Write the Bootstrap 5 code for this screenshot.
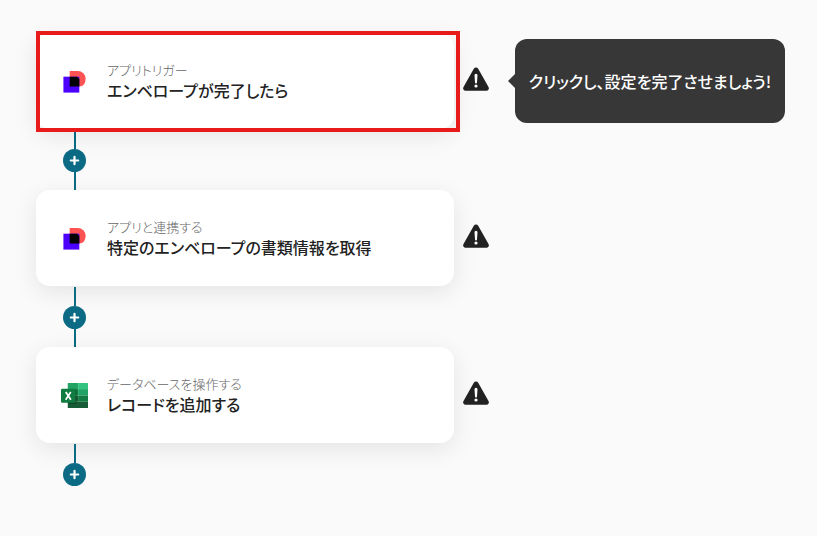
<!DOCTYPE html>
<html lang="ja">
<head>
<meta charset="utf-8">
<meta name="viewport" content="width=device-width, initial-scale=1">
<title>フロー設定</title>
<link href="https://cdn.jsdelivr.net/npm/bootstrap@5.3.0/dist/css/bootstrap.min.css" rel="stylesheet">
<style>
body, button { font-family: "Noto Sans CJK JP", "Noto Sans", sans-serif; font-feature-settings: "palt"; }
body { background: #fafafa; color: #222; }
.flow { padding: 33px 32px 32px 36px; }
.step-card { flex: 0 1 418px; min-width: 0; min-height: 96px; padding: 16px 25px; gap: 19px; background: #fff; color: #222; border: 0; border-radius: 14px; box-shadow: 0 6px 24px rgba(0,0,0,.09); }
.step-card svg { flex: none; }
.step-kind { font-size: 13px; line-height: 18px; font-weight: 300; color: #666; }
.step-title { font-size: 16px; line-height: 22px; font-weight: 500; }
.highlight::after { content: ""; position: absolute; inset: -2px -6px -3px 0; border: 4px solid #e81a1a; pointer-events: none; }
.warn { margin-left: 9px; padding: 0 0 4px; line-height: 0; }
.link-line { width: 77px; padding-top: 1px; }
.stem { width: 2px; background: #0b6a84; }
.stem-up { height: 19px; }
.stem-down { height: 18px; }
.add { width: 23px; height: 23px; background: #0b6a84; line-height: 0; }
.hint { flex: 0 1 270px; margin-left: 26px; min-height: 84px; padding: 4px 12px; border-radius: 12px; background: #373737; color: #fff; font-size: 16px; line-height: 24px; font-weight: 500; }
.hint::before { content: ""; position: absolute; right: 100%; top: 50%; transform: translateY(-50%); border: 7px solid transparent; border-left: 0; border-right-color: #373737; }
</style>
<script src="https://cdn.jsdelivr.net/npm/bootstrap@5.3.0/dist/js/bootstrap.bundle.min.js"></script>
</head>
<body>
<svg class="d-none" aria-hidden="true">
  <symbol id="i-warn" viewBox="0 0 26 24"><path d="M10.8 1.7a2.5 2.5 0 0 1 4.4 0l10.3 18.2a2.5 2.5 0 0 1-2.2 3.8H2.7a2.5 2.5 0 0 1-2.2-3.8z" fill="#222"/><path d="M11.5 8.2a1.5 1.5 0 0 1 3 0l-.5 7.3a1 1 0 0 1-2 0z" fill="#fff"/><circle cx="13" cy="19" r="1.6" fill="#fff"/></symbol>
  <symbol id="i-sign" viewBox="0 0 28 28"><path d="M9 3h8.500a8 8 0 0 1 8 8c0 5.500-2.500 8.200-6.500 8.200H9z" fill="#ff5252"/><path d="M2.500 9h16.500v16.500H2.500z" fill="#4c00ff"/><path d="M9 9h7.500l2.500 2.500v7.700H9z" fill="#000"/></symbol>
  <symbol id="i-plus" viewBox="0 0 23 23"><path d="M11.500 7.800v7.400M7.800 11.500h7.400" stroke="#fff" stroke-width="2.200" stroke-linecap="round"/></symbol>
</svg>
<main class="flow">
  <div class="d-flex align-items-center">
    <button type="button" class="step-card highlight position-relative d-flex align-items-center text-start">
      <svg width="27" height="27" aria-hidden="true"><use href="#i-sign"/></svg>
      <span><span class="step-kind d-block">アプリトリガー</span><span class="step-title d-block">エンベロープが完了したら</span></span>
    </button>
    <button type="button" class="warn btn border-0" aria-label="設定が未完了です"><svg width="26" height="24"><use href="#i-warn"/></svg></button>
    <div class="hint position-relative d-flex align-items-center justify-content-center" role="tooltip">クリックし、設定を完了させましょう!</div>
  </div>
  <div class="link-line d-flex flex-column align-items-center">
    <div class="stem stem-up"></div>
    <button type="button" class="add btn rounded-circle border-0 p-0" aria-label="ステップを追加"><svg width="23" height="23"><use href="#i-plus"/></svg></button>
    <div class="stem stem-down"></div>
  </div>
  <div class="d-flex align-items-center">
    <button type="button" class="step-card d-flex align-items-center text-start">
      <svg width="27" height="27" aria-hidden="true"><use href="#i-sign"/></svg>
      <span><span class="step-kind d-block">アプリと連携する</span><span class="step-title d-block">特定のエンベロープの書類情報を取得</span></span>
    </button>
    <button type="button" class="warn btn border-0" aria-label="設定が未完了です"><svg width="26" height="24"><use href="#i-warn"/></svg></button>
  </div>
  <div class="link-line d-flex flex-column align-items-center">
    <div class="stem stem-up"></div>
    <button type="button" class="add btn rounded-circle border-0 p-0" aria-label="ステップを追加"><svg width="23" height="23"><use href="#i-plus"/></svg></button>
    <div class="stem stem-down"></div>
  </div>
  <div class="d-flex align-items-center">
    <button type="button" class="step-card d-flex align-items-center text-start">
      <svg width="27" height="27" viewBox="0 0 26 26" aria-hidden="true">
        <path d="M7 1h9.500v6.500h-10v-6q0-.5.5-.5z" fill="#21a366"/><path d="M16.500 1h9q.5 0 .5.500v6h-9.500z" fill="#33c481"/>
        <path d="M6.500 7h10v6h-10z" fill="#107c41"/><path d="M16.500 7H26v6h-9.500z" fill="#21a366"/>
        <path d="M6.500 13h10v6h-10z" fill="#185c37"/><path d="M16.500 13H26v6h-9.500z" fill="#107c41"/><path d="M6.500 19H26v5.500q0 .5-.5.500H7q-.5 0-.5-.5z" fill="#185c37"/><path d="M6.500 7H14q1 0 1 1v12q0 1-1 1H6.500z" fill="#000" opacity=".25"/>
        <rect y="6.500" width="14" height="13.500" rx="1" fill="#107c41"/><path d="M4.600 9.700 9.500 17M9.400 9.700 4.500 17" stroke="#fff" stroke-width="1.700"/>
      </svg>
      <span><span class="step-kind d-block">データベースを操作する</span><span class="step-title d-block">レコードを追加する</span></span>
    </button>
    <button type="button" class="warn btn border-0" aria-label="設定が未完了です"><svg width="26" height="24"><use href="#i-warn"/></svg></button>
  </div>
  <div class="link-line d-flex flex-column align-items-center">
    <div class="stem stem-up"></div>
    <button type="button" class="add btn rounded-circle border-0 p-0" aria-label="ステップを追加"><svg width="23" height="23"><use href="#i-plus"/></svg></button>
  </div>
</main>
</body>
</html>
